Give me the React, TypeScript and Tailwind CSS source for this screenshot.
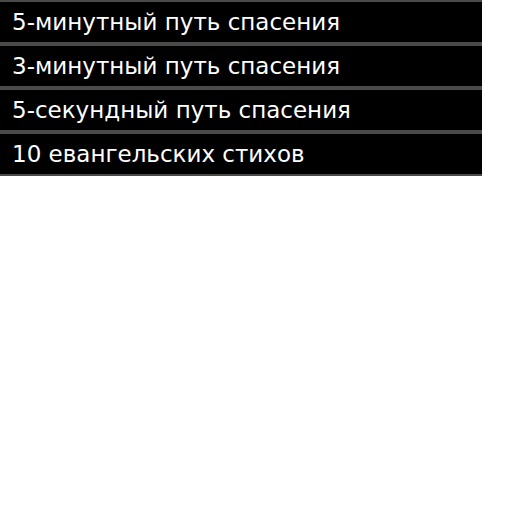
const items = [
  "5-минутный путь спасения",
  "3-минутный путь спасения",
  "5-секундный путь спасения",
  "10 евангельских стихов",
];

export default function App() {
  return (
    <div className="w-[482px] bg-white" style={{ fontFamily: "'DejaVu Sans', sans-serif" }}>
      {items.map((t) => (
        <div
          key={t}
          className="h-[44px] bg-black border-y-2 border-[#4a4a4a] flex items-center pl-3 text-white text-[23px] leading-none"
        >
          {t}
        </div>
      ))}
    </div>
  );
}
